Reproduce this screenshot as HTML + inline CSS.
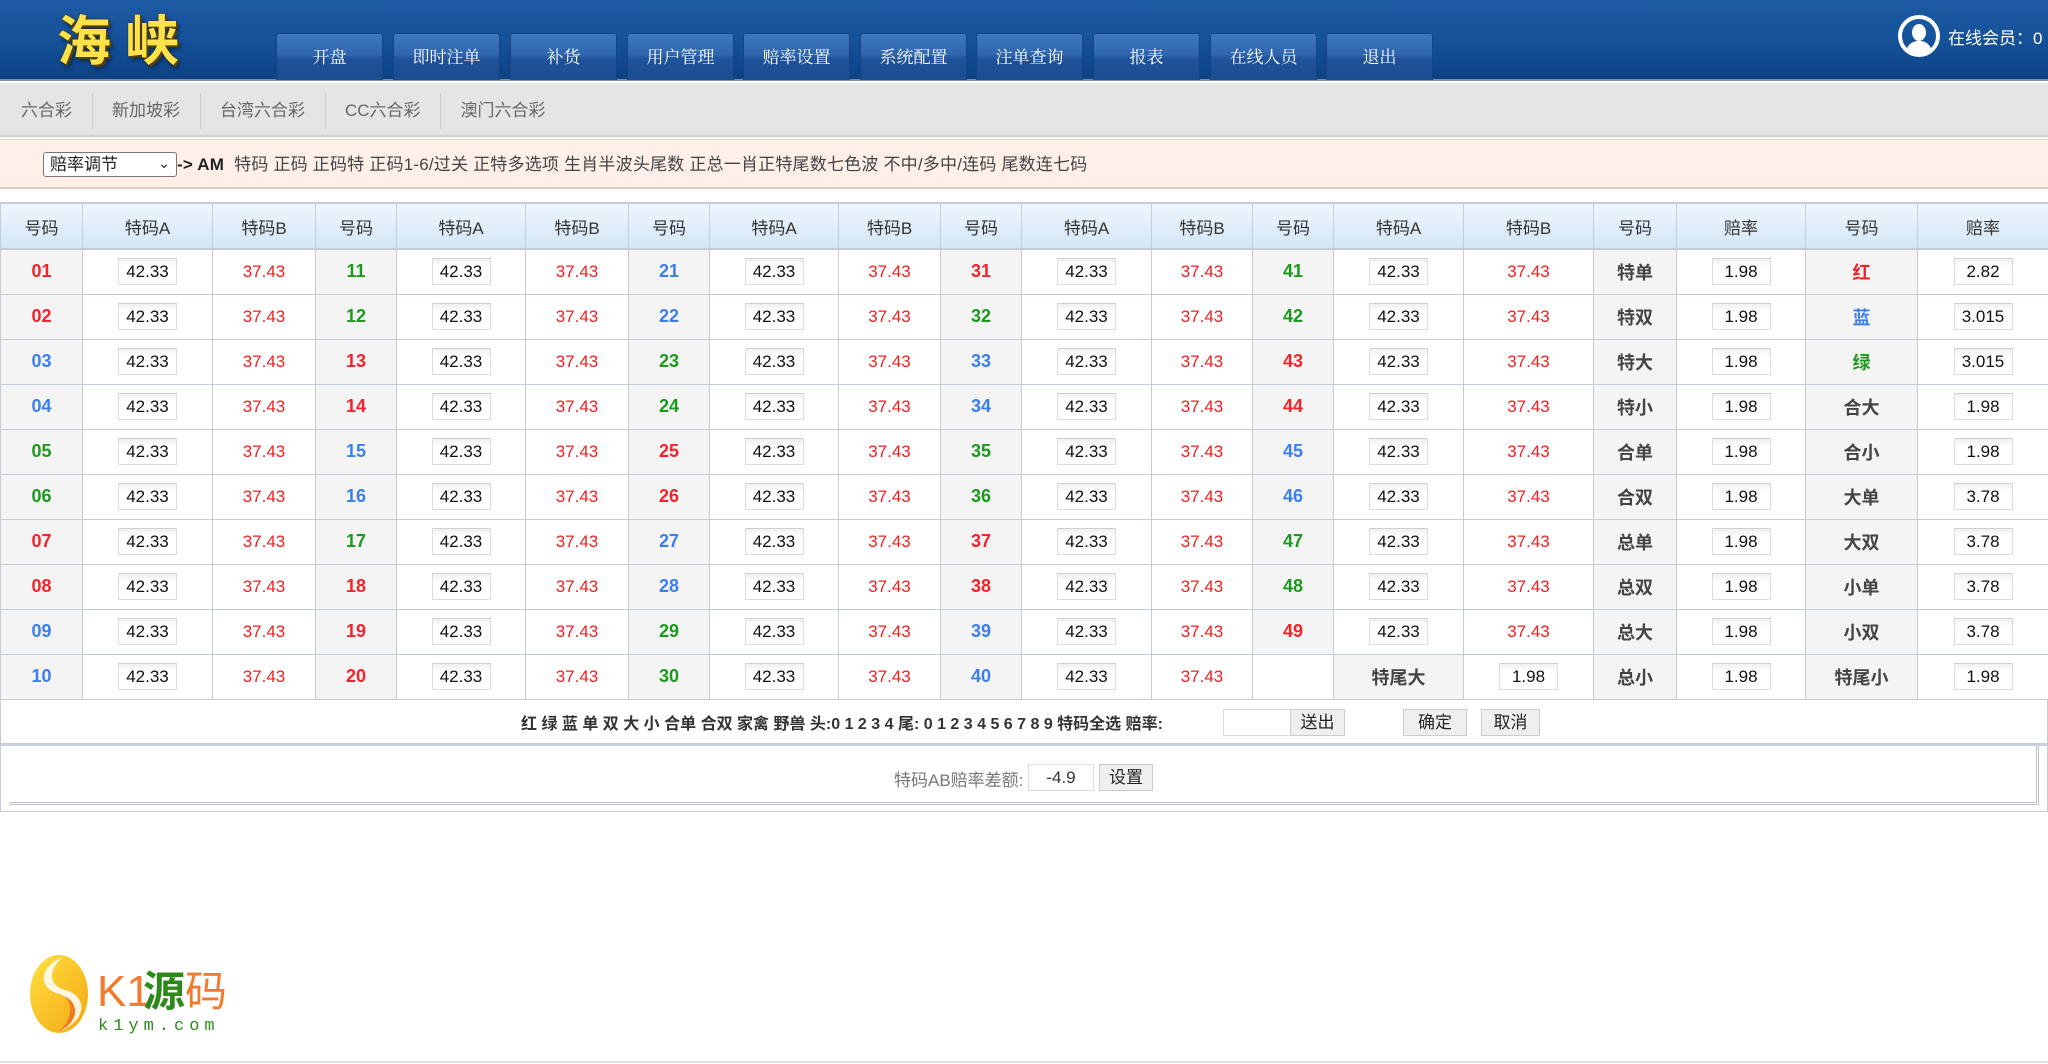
<!DOCTYPE html>
<html><head><meta charset="utf-8"><style>
*{box-sizing:border-box;margin:0;padding:0}
body{width:2048px;height:1064px;position:relative;background:#fff;font-family:"Liberation Sans","Noto Sans CJK SC",sans-serif;overflow:hidden;color:#333}
#hd{position:absolute;left:0;top:0;width:2048px;height:81px;background:linear-gradient(180deg,#1c5aa3 0%,#15529a 50%,#0d4185 100%);border-bottom:2px solid #7f8fa3}
#logo{position:absolute;left:57px;top:4px;font:bold 54px/66px "Noto Sans CJK SC",sans-serif;color:#ffe24a;letter-spacing:14px;text-shadow:0 0 2px #3a2a00,2px 2px 0 #5a4500,3px 4px 4px #0a2550;}
.nb{position:absolute;top:33px;width:107px;height:47px;background:linear-gradient(180deg,#3f78c0 0%,#2f66ae 45%,#1f5298 55%,#1c4d92 100%);border:1px solid #164482;border-bottom:none;border-radius:3px 3px 0 0;color:#fff;font:17px/44px "Noto Serif CJK SC","Noto Sans CJK SC",serif;text-align:center}
#on{position:absolute;left:1898px;top:15px;width:42px;height:42px;border-radius:50%;border:4px solid #fff;overflow:hidden}
#on:before{content:"";position:absolute;left:10px;top:5px;width:14px;height:17px;border-radius:50%;background:#fff}
#on:after{content:"";position:absolute;left:4px;top:22px;width:26px;height:20px;border-radius:12px 12px 0 0;background:#fff}
#ont{position:absolute;left:1948px;top:24px;color:#fff;font-size:17px}
#sub{position:absolute;left:0;top:83px;width:2048px;height:54px;background:#e5e5e5;border-bottom:2px solid #d0d0d0}
#sub span{float:left;height:36px;margin-top:10px;line-height:36px;padding:0 19.5px;color:#666;font-size:17px;border-left:1px solid #ccc}
#sub span:first-child{border-left:none;padding-left:21px}
#bar{position:absolute;left:0;top:139px;width:2048px;height:50px;background:#fef0e8;border-top:1px solid #e4d8d2;border-bottom:2px solid #e3cbc0;font-size:17px;color:#444}
#sel{position:absolute;left:43px;top:12px;width:134px;height:25px;border:1px solid #777;border-radius:3px;background:#fff;font-size:17px;line-height:23px;padding-left:6px;color:#222}
#sel b{position:absolute;right:6px;top:-1px;font-weight:normal;font-size:14px}
#bt{position:absolute;left:177px;top:13px;line-height:24px;white-space:nowrap;letter-spacing:.2px}
#bt b{color:#222;margin-right:10px}
table{position:absolute;left:0;top:202px;width:2048px;border-collapse:collapse;table-layout:fixed}
th,td{border:1px solid #c3cdd9;text-align:center;font-size:17px}
th{height:46px;background:linear-gradient(#eef6fd,#d3e6f6);font-weight:normal;color:#333;border-top:2px solid #c3cdd9;border-bottom:2px solid #c3cdd9}
td{height:45px;background:#fff}
td.n{background:#f4f4f4;font-weight:bold;font-size:18px}
.r{color:#f2242b}.b{color:#3b7ef0}.g{color:#1b9a1b}.k{color:#444}
td.p{color:#f02020}
i{display:inline-block;font-style:normal;width:59px;height:27px;line-height:26px;border:1px solid #dcdcdc;border-top-color:#cfcfcf;background:linear-gradient(#f0f0f0,#fff 30%);color:#111;font-size:17px;vertical-align:middle}
#r2{position:absolute;left:0;top:699px;width:2048px;height:45px;border:1px solid #c3cdd9;border-top:none;font-size:16px;font-weight:bold;color:#333}
#r2 .t{position:absolute;left:520px;top:11px;white-space:nowrap}
.in{position:absolute;background:#fff;border:1px solid #ddd;height:27px}
.btn{position:absolute;height:27px;line-height:25px;background:#efefef;border:1px solid #ccc;text-align:center;font-weight:normal;font-size:17px;color:#222}
#r3{position:absolute;left:0;top:744px;width:2048px;height:68px;border:1px solid #c3cdd9;border-top:2px solid #c8d2de}
#r3 .box{position:absolute;left:8px;top:0;width:2030px;height:59px;border-bottom:3px double #b9c4d2;border-right:3px double #b9c4d2}
#r3 .t{position:absolute;left:893px;top:20px;color:#777;font-size:17px}
#k1{position:absolute;left:29px;top:952px}
#bl{position:absolute;left:0;top:1061px;width:2048px;height:2px;background:#e2e2e2}
</style></head><body>
<div id="hd">
<div id="logo">海峡</div>
<div class="nb" style="left:276px">开盘</div>
<div class="nb" style="left:393px">即时注单</div>
<div class="nb" style="left:510px">补货</div>
<div class="nb" style="left:627px">用户管理</div>
<div class="nb" style="left:743px">赔率设置</div>
<div class="nb" style="left:860px">系统配置</div>
<div class="nb" style="left:976px">注单查询</div>
<div class="nb" style="left:1093px">报表</div>
<div class="nb" style="left:1210px">在线人员</div>
<div class="nb" style="left:1326px">退出</div>
<div id="on"></div>
<div id="ont">在线会员：0</div>
</div>
<div id="sub"><span>六合彩</span><span>新加坡彩</span><span>台湾六合彩</span><span>CC六合彩</span><span>澳门六合彩</span></div>
<div id="bar"><div id="sel">赔率调节<b>⌄</b></div><div id="bt"><b>-&gt; AM</b>特码 正码 正码特 正码1-6/过关 正特多选项 生肖半波头尾数 正总一肖正特尾数七色波 不中/多中/连码 尾数连七码</div></div>
<table>
<colgroup><col style="width:82px"><col style="width:130px"><col style="width:103px"><col style="width:81px"><col style="width:129px"><col style="width:103px"><col style="width:81px"><col style="width:129px"><col style="width:102px"><col style="width:81px"><col style="width:130px"><col style="width:101px"><col style="width:81px"><col style="width:130px"><col style="width:130px"><col style="width:83px"><col style="width:129px"><col style="width:112px"><col style="width:131px"></colgroup>
<tr><th>号码</th><th>特码A</th><th>特码B</th><th>号码</th><th>特码A</th><th>特码B</th><th>号码</th><th>特码A</th><th>特码B</th><th>号码</th><th>特码A</th><th>特码B</th><th>号码</th><th>特码A</th><th>特码B</th><th>号码</th><th>赔率</th><th>号码</th><th>赔率</th></tr>
<tr><td class="n r">01</td><td><i>42.33</i></td><td class="p">37.43</td><td class="n g">11</td><td><i>42.33</i></td><td class="p">37.43</td><td class="n b">21</td><td><i>42.33</i></td><td class="p">37.43</td><td class="n r">31</td><td><i>42.33</i></td><td class="p">37.43</td><td class="n g">41</td><td><i>42.33</i></td><td class="p">37.43</td><td class="n k">特单</td><td><i>1.98</i></td><td class="n r">红</td><td><i>2.82</i></td></tr>
<tr><td class="n r">02</td><td><i>42.33</i></td><td class="p">37.43</td><td class="n g">12</td><td><i>42.33</i></td><td class="p">37.43</td><td class="n b">22</td><td><i>42.33</i></td><td class="p">37.43</td><td class="n g">32</td><td><i>42.33</i></td><td class="p">37.43</td><td class="n g">42</td><td><i>42.33</i></td><td class="p">37.43</td><td class="n k">特双</td><td><i>1.98</i></td><td class="n b">蓝</td><td><i>3.015</i></td></tr>
<tr><td class="n b">03</td><td><i>42.33</i></td><td class="p">37.43</td><td class="n r">13</td><td><i>42.33</i></td><td class="p">37.43</td><td class="n g">23</td><td><i>42.33</i></td><td class="p">37.43</td><td class="n b">33</td><td><i>42.33</i></td><td class="p">37.43</td><td class="n r">43</td><td><i>42.33</i></td><td class="p">37.43</td><td class="n k">特大</td><td><i>1.98</i></td><td class="n g">绿</td><td><i>3.015</i></td></tr>
<tr><td class="n b">04</td><td><i>42.33</i></td><td class="p">37.43</td><td class="n r">14</td><td><i>42.33</i></td><td class="p">37.43</td><td class="n g">24</td><td><i>42.33</i></td><td class="p">37.43</td><td class="n b">34</td><td><i>42.33</i></td><td class="p">37.43</td><td class="n r">44</td><td><i>42.33</i></td><td class="p">37.43</td><td class="n k">特小</td><td><i>1.98</i></td><td class="n k">合大</td><td><i>1.98</i></td></tr>
<tr><td class="n g">05</td><td><i>42.33</i></td><td class="p">37.43</td><td class="n b">15</td><td><i>42.33</i></td><td class="p">37.43</td><td class="n r">25</td><td><i>42.33</i></td><td class="p">37.43</td><td class="n g">35</td><td><i>42.33</i></td><td class="p">37.43</td><td class="n b">45</td><td><i>42.33</i></td><td class="p">37.43</td><td class="n k">合单</td><td><i>1.98</i></td><td class="n k">合小</td><td><i>1.98</i></td></tr>
<tr><td class="n g">06</td><td><i>42.33</i></td><td class="p">37.43</td><td class="n b">16</td><td><i>42.33</i></td><td class="p">37.43</td><td class="n r">26</td><td><i>42.33</i></td><td class="p">37.43</td><td class="n g">36</td><td><i>42.33</i></td><td class="p">37.43</td><td class="n b">46</td><td><i>42.33</i></td><td class="p">37.43</td><td class="n k">合双</td><td><i>1.98</i></td><td class="n k">大单</td><td><i>3.78</i></td></tr>
<tr><td class="n r">07</td><td><i>42.33</i></td><td class="p">37.43</td><td class="n g">17</td><td><i>42.33</i></td><td class="p">37.43</td><td class="n b">27</td><td><i>42.33</i></td><td class="p">37.43</td><td class="n r">37</td><td><i>42.33</i></td><td class="p">37.43</td><td class="n g">47</td><td><i>42.33</i></td><td class="p">37.43</td><td class="n k">总单</td><td><i>1.98</i></td><td class="n k">大双</td><td><i>3.78</i></td></tr>
<tr><td class="n r">08</td><td><i>42.33</i></td><td class="p">37.43</td><td class="n r">18</td><td><i>42.33</i></td><td class="p">37.43</td><td class="n b">28</td><td><i>42.33</i></td><td class="p">37.43</td><td class="n r">38</td><td><i>42.33</i></td><td class="p">37.43</td><td class="n g">48</td><td><i>42.33</i></td><td class="p">37.43</td><td class="n k">总双</td><td><i>1.98</i></td><td class="n k">小单</td><td><i>3.78</i></td></tr>
<tr><td class="n b">09</td><td><i>42.33</i></td><td class="p">37.43</td><td class="n r">19</td><td><i>42.33</i></td><td class="p">37.43</td><td class="n g">29</td><td><i>42.33</i></td><td class="p">37.43</td><td class="n b">39</td><td><i>42.33</i></td><td class="p">37.43</td><td class="n r">49</td><td><i>42.33</i></td><td class="p">37.43</td><td class="n k">总大</td><td><i>1.98</i></td><td class="n k">小双</td><td><i>3.78</i></td></tr>
<tr><td class="n b">10</td><td><i>42.33</i></td><td class="p">37.43</td><td class="n r">20</td><td><i>42.33</i></td><td class="p">37.43</td><td class="n g">30</td><td><i>42.33</i></td><td class="p">37.43</td><td class="n b">40</td><td><i>42.33</i></td><td class="p">37.43</td><td></td><td class="n k">特尾大</td><td><i>1.98</i></td><td class="n k">总小</td><td><i>1.98</i></td><td class="n k">特尾小</td><td><i>1.98</i></td></tr>
</table>
<div id="r2"><div class="t">红 绿 蓝 单 双 大 小 合单 合双 家禽 野兽 头:0 1 2 3 4 尾: 0 1 2 3 4 5 6 7 8 9 特码全选 赔率:</div>
<div class="in" style="left:1222px;top:10px;width:68px"></div>
<div class="btn" style="left:1289px;top:10px;width:55px">送出</div>
<div class="btn" style="left:1402px;top:10px;width:64px">确定</div>
<div class="btn" style="left:1480px;top:10px;width:59px">取消</div>
</div>
<div id="r3"><div class="box"></div><div class="t">特码AB赔率差额:</div>
<div class="in" style="left:1027px;top:18px;width:66px;text-align:center;font-size:17px;line-height:25px">-4.9</div>
<div class="btn" style="left:1098px;top:18px;width:54px">设置</div>
</div>
<svg id="k1" width="210" height="84" viewBox="0 0 210 84">
<defs><linearGradient id="gy" x1="0" y1="0" x2="1" y2="1"><stop offset="0" stop-color="#ffe040"/><stop offset="1" stop-color="#f3a712"/></linearGradient></defs>
<ellipse cx="30" cy="42" rx="29" ry="39" fill="url(#gy)"/>
<path d="M34 5 C10 14 8 36 30 42 C48 48 42 72 28 80 C58 70 60 44 36 38 C18 33 20 16 34 5Z" fill="#fff" opacity=".85"/>
<path d="M30 42 C48 48 42 72 28 80 C50 72 52 50 34 44Z" fill="#f07a20"/>
<text x="68" y="54" font-family="Liberation Sans,sans-serif" font-size="44" fill="#f27a2c">K1</text>
<text x="114" y="54" font-family="Noto Sans CJK SC,sans-serif" font-weight="bold" font-size="42" fill="#2d8a1a">源</text>
<text x="156" y="54" font-family="Noto Sans CJK SC,sans-serif" font-size="42" fill="#f27a2c">码</text>
<text x="69" y="78" font-family="Liberation Mono,monospace" font-size="17" fill="#2d8a1a" letter-spacing="5">k1ym.com</text>
</svg>
<div id="bl"></div>
</body></html>
